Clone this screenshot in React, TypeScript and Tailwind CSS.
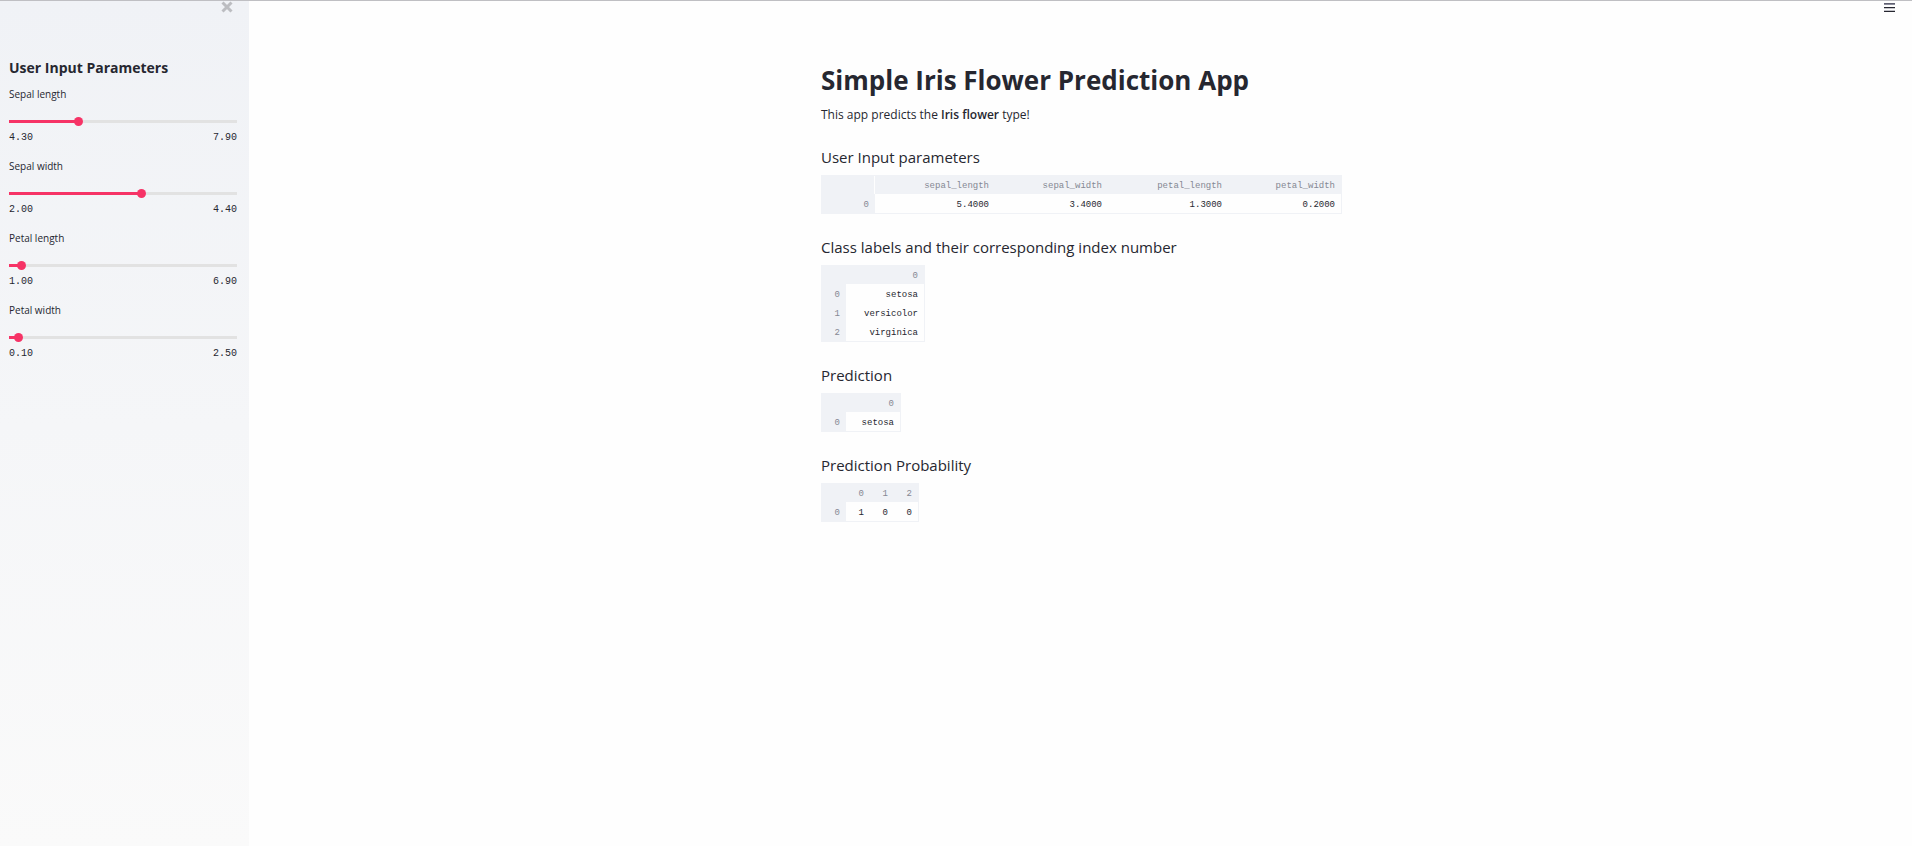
import { useState } from "react";

type SliderSpec = { id: string; label: string; min: number; max: number; initial: number };

const sliders: SliderSpec[] = [
  { id: "sepal-length", label: "Sepal length", min: 4.3, max: 7.9, initial: 5.4 },
  { id: "sepal-width", label: "Sepal width", min: 2, max: 4.4, initial: 3.4 },
  { id: "petal-length", label: "Petal length", min: 1, max: 6.9, initial: 1.3 },
  { id: "petal-width", label: "Petal width", min: 0.1, max: 2.5, initial: 0.2 },
];

function Slider({ spec }: { spec: SliderSpec }) {
  const [value, setValue] = useState(spec.initial);
  const percent = ((value - spec.min) / (spec.max - spec.min)) * 100;
  return (
    <div className="flex h-[72px] flex-col">
      <label htmlFor={spec.id} className="text-[10px] leading-4">
        {spec.label}
      </label>
      <div
        className="mt-[15px] flex h-[9px] items-center bg-[length:100%_3px] bg-center bg-no-repeat"
        style={{
          backgroundImage: `linear-gradient(to right, #f63366 ${percent}%, #e2e2e2 ${percent}%)`,
        }}
      >
        <input
          id={spec.id}
          type="range"
          min={spec.min}
          max={spec.max}
          step={0.1}
          value={value}
          onChange={(e) => setValue(Number(e.target.value))}
          className="-mx-1 h-[9px] w-full min-w-0 flex-1 cursor-pointer appearance-none bg-transparent [&::-moz-range-thumb]:size-[9px] [&::-moz-range-thumb]:border-0 [&::-moz-range-thumb]:bg-[#f63366] [&::-webkit-slider-thumb]:size-[9px] [&::-webkit-slider-thumb]:appearance-none [&::-webkit-slider-thumb]:rounded-full [&::-webkit-slider-thumb]:bg-[#f63366]"
        />
      </div>
      <div className="mt-1 flex justify-between font-['Liberation_Mono',monospace] text-[10px] leading-4">
        <span>{spec.min.toFixed(2)}</span>
        <span>{spec.max.toFixed(2)}</span>
      </div>
    </div>
  );
}

type FrameProps = {
  label: string;
  columns: string[];
  rows: string[][];
  indexWidth: string;
  columnWidths: string[];
  divided?: boolean;
};

function DataFrame({ label, columns, rows, indexWidth, columnWidths, divided }: FrameProps) {
  return (
    <table
      aria-label={label}
      className="mt-2 w-max table-fixed border-separate border-spacing-0 border border-[#f0f2f6] text-right font-['Liberation_Mono',monospace] text-[9px] leading-3"
    >
      <colgroup>
        <col className={indexWidth} />
        {columnWidths.map((width, i) => (
          <col key={i} className={width} />
        ))}
      </colgroup>
      <thead>
        <tr className="h-[18px] bg-[#f0f2f6] text-[#858893]">
          <td className={divided ? "border-r border-[#fefefe]" : ""} />
          {columns.map((column) => (
            <th key={column} scope="col" className="px-[6px] pt-[2px] pb-0 font-normal">
              {column}
            </th>
          ))}
        </tr>
      </thead>
      <tbody>
        {rows.map((row, i) => (
          <tr key={i} className="h-[19px]">
            <th scope="row" className="bg-[#f0f2f6] px-[6px] pt-[2px] pb-0 font-normal text-[#858893]">
              {i}
            </th>
            {row.map((cell, j) => (
              <td key={j} className="px-[6px] pt-[2px] pb-0">
                {cell}
              </td>
            ))}
          </tr>
        ))}
      </tbody>
    </table>
  );
}

function Section({ title, frame }: { title: string; frame: Omit<FrameProps, "label"> }) {
  return (
    <section className="mt-[23px]">
      <h3 className="text-[15px] leading-5">{title}</h3>
      <DataFrame label={title} {...frame} />
    </section>
  );
}

export default function App() {
  return (
    <div className="flex min-h-screen border-t border-[#bfbfc3] bg-[#fefefe] font-['Open_Sans',sans-serif] text-[#262730]">
      <aside className="w-[249px] shrink-0 bg-linear-to-b from-[#f0f2f6] to-[#fafafa] pr-3 pl-[9px]">
        <div className="flex h-[57px] items-start justify-end pr-1">
          <button type="button" aria-label="Close sidebar" className="text-[#bcbdc1]">
            <svg viewBox="0 0 12 12" className="size-3" fill="none" stroke="currentColor" strokeWidth="3">
              <path d="M1.5 1.5 10.5 10.5M10.5 1.5 1.5 10.5" />
            </svg>
          </button>
        </div>
        <h2 className="text-[14px] leading-5 font-bold">User Input Parameters</h2>
        <div className="mt-2">
          {sliders.map((spec) => (
            <Slider key={spec.id} spec={spec} />
          ))}
        </div>
      </aside>

      <div className="flex min-w-0 flex-1 flex-col">
        <header className="flex h-[59px] items-start justify-end pt-[2px] pr-[17px]">
          <button type="button" aria-label="Menu">
            <svg viewBox="0 0 11 10" className="h-[10px] w-[11px]" shapeRendering="crispEdges">
              <path fill="#5f5f70" d="M0 0h11v1H0z" />
              <path fill="#8b8c9b" d="M0 1h11v1H0z" />
              <path fill="#262730" d="M0 4h11v1H0zM0 8h11v1H0z" />
              <path fill="#c4c4ca" d="M0 5h11v1H0zM0 7h11v1H0z" />
            </svg>
          </button>
        </header>
        <main className="mx-auto w-full max-w-[519px]">
          <h1 className="text-[26px] leading-10 font-bold">Simple Iris Flower Prediction App</h1>
          <p className="mt-[6px] text-[12px] leading-[18px]">
            This app predicts the <strong className="font-semibold">Iris flower</strong> type!
          </p>
          <Section
            title="User Input parameters"
            frame={{
              columns: ["sepal_length", "sepal_width", "petal_length", "petal_width"],
              rows: [["5.4000", "3.4000", "1.3000", "0.2000"]],
              indexWidth: "w-[53px]",
              columnWidths: ["w-[120px]", "w-[113px]", "w-[120px]", "w-[113px]"],
              divided: true,
            }}
          />
          <Section
            title="Class labels and their corresponding index number"
            frame={{
              columns: ["0"],
              rows: [["setosa"], ["versicolor"], ["virginica"]],
              indexWidth: "w-6",
              columnWidths: ["w-[78px]"],
            }}
          />
          <Section
            title="Prediction"
            frame={{
              columns: ["0"],
              rows: [["setosa"]],
              indexWidth: "w-6",
              columnWidths: ["w-[54px]"],
            }}
          />
          <Section
            title="Prediction Probability"
            frame={{
              columns: ["0", "1", "2"],
              rows: [["1", "0", "0"]],
              indexWidth: "w-6",
              columnWidths: ["w-6", "w-6", "w-6"],
            }}
          />
        </main>
      </div>
    </div>
  );
}
